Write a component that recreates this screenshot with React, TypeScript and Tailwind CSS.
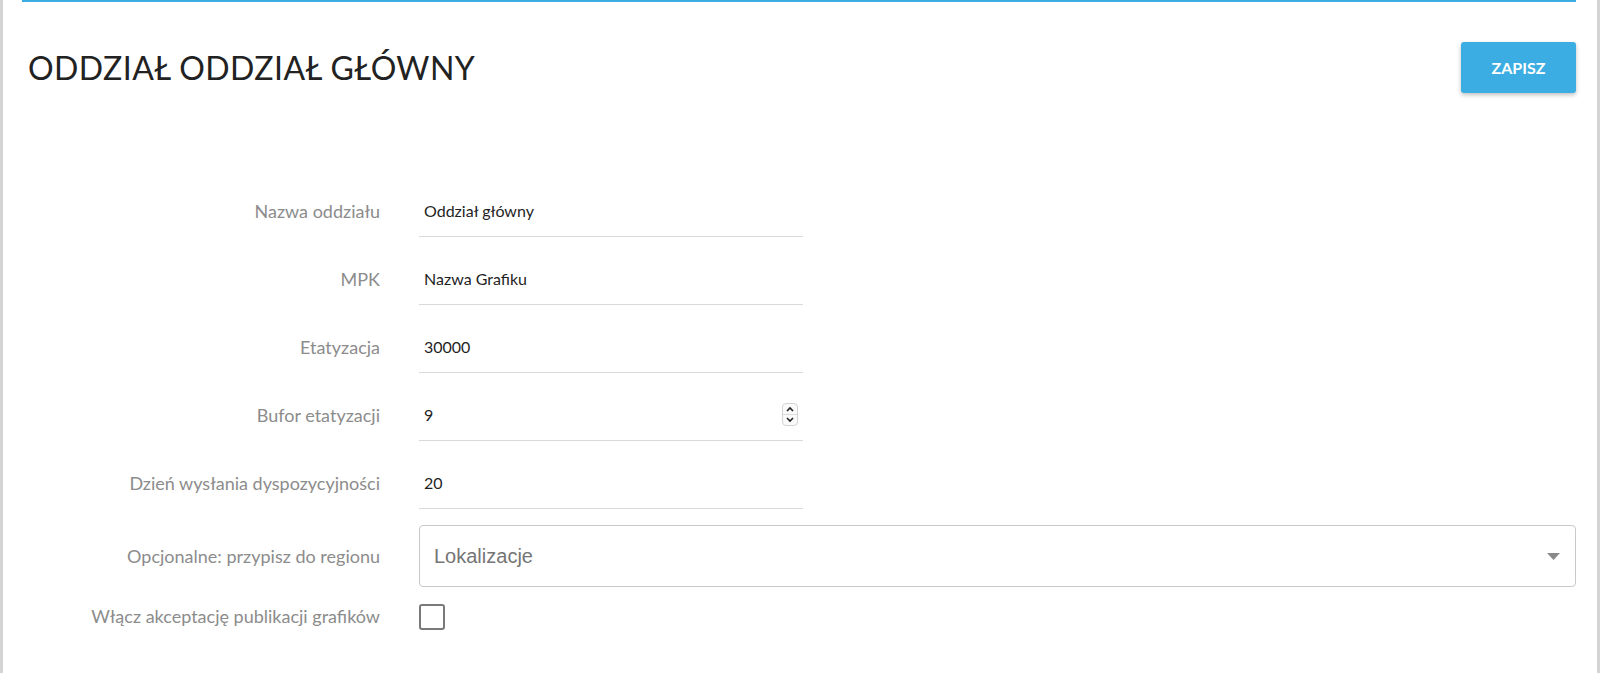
import React from "react";

type Field = {
  label: string;
  value: string;
  spinner?: boolean;
};

const fields: Field[] = [
  { label: "Nazwa oddziału", value: "Oddział główny" },
  { label: "MPK", value: "Nazwa Grafiku" },
  { label: "Etatyzacja", value: "30000" },
  { label: "Bufor etatyzacji", value: "9", spinner: true },
  { label: "Dzień wysłania dyspozycyjności", value: "20" },
];

function Spinner() {
  return (
    <div className="flex h-[23px] w-[16px] flex-col items-center justify-between rounded-[4px] border border-[#d4d4d4] bg-[#fafafa] py-[2px]">
      <svg width="8" height="6" viewBox="0 0 8 6">
        <path d="M1 5 L4 2 L7 5" fill="none" stroke="#222" strokeWidth="1.6" />
      </svg>
      <div className="h-px w-full bg-[#dcdcdc]" />
      <svg width="8" height="6" viewBox="0 0 8 6">
        <path d="M1 1 L4 4 L7 1" fill="none" stroke="#222" strokeWidth="1.6" />
      </svg>
    </div>
  );
}

export default function App() {
  return (
    <div className="h-[673px] w-full border-x-[3px] border-[#d4d4d4] bg-white font-['Lato','Noto_Sans',sans-serif]">
      <div className="mx-[19px] mr-[21px]">
        <div className="h-[2px] bg-[#3badE2]" />

        <div className="flex items-center justify-between pt-[40px]">
          <h1 className="pl-[6px] text-[32px] font-normal leading-none tracking-[0.45px] text-[#222]">
            ODDZIAŁ ODDZIAŁ GŁÓWNY
          </h1>
          <button className="h-[51px] w-[115px] rounded-[3px] bg-[#3badE2] text-[16px] font-bold text-white shadow-[0_2px_4px_rgba(0,0,0,0.25)]">
            ZAPISZ
          </button>
        </div>

        <div className="mt-[92px] flex flex-col gap-[16px]">
          {fields.map((f) => (
            <div key={f.label} className="flex items-center">
              <div className="w-[358px] text-right text-[18px] text-[#8c8c8c]">{f.label}</div>
              <div className="ml-[39px] flex h-[52px] w-[384px] items-center justify-between border-b border-[#d9d9d9] pl-[5px] pr-[5px]">
                <span className="text-[16px] text-[#1f1f1f]">{f.value}</span>
                {f.spinner && <Spinner />}
              </div>
            </div>
          ))}

          <div className="flex items-center">
            <div className="w-[358px] text-right text-[18px] text-[#8c8c8c]">
              Opcjonalne: przypisz do regionu
            </div>
            <div className="ml-[39px] flex h-[62px] flex-1 items-center justify-between rounded-[4px] border border-[#c9c9c9] pl-[14px] pr-[15px]">
              <span className="font-['Liberation_Sans',sans-serif] text-[20px] text-[#757575]">
                Lokalizacje
              </span>
              <svg width="13" height="7" viewBox="0 0 13 7">
                <path d="M0 0 L13 0 L6.5 7 Z" fill="#8a8a8a" />
              </svg>
            </div>
          </div>

          <div className="flex items-center">
            <div className="w-[358px] text-right text-[18px] text-[#8c8c8c]">
              Włącz akceptację publikacji grafików
            </div>
            <div className="ml-[39px] h-[26px] w-[26px] rounded-[3px] border-2 border-[#7a7a7a]" />
          </div>
        </div>
      </div>
    </div>
  );
}
